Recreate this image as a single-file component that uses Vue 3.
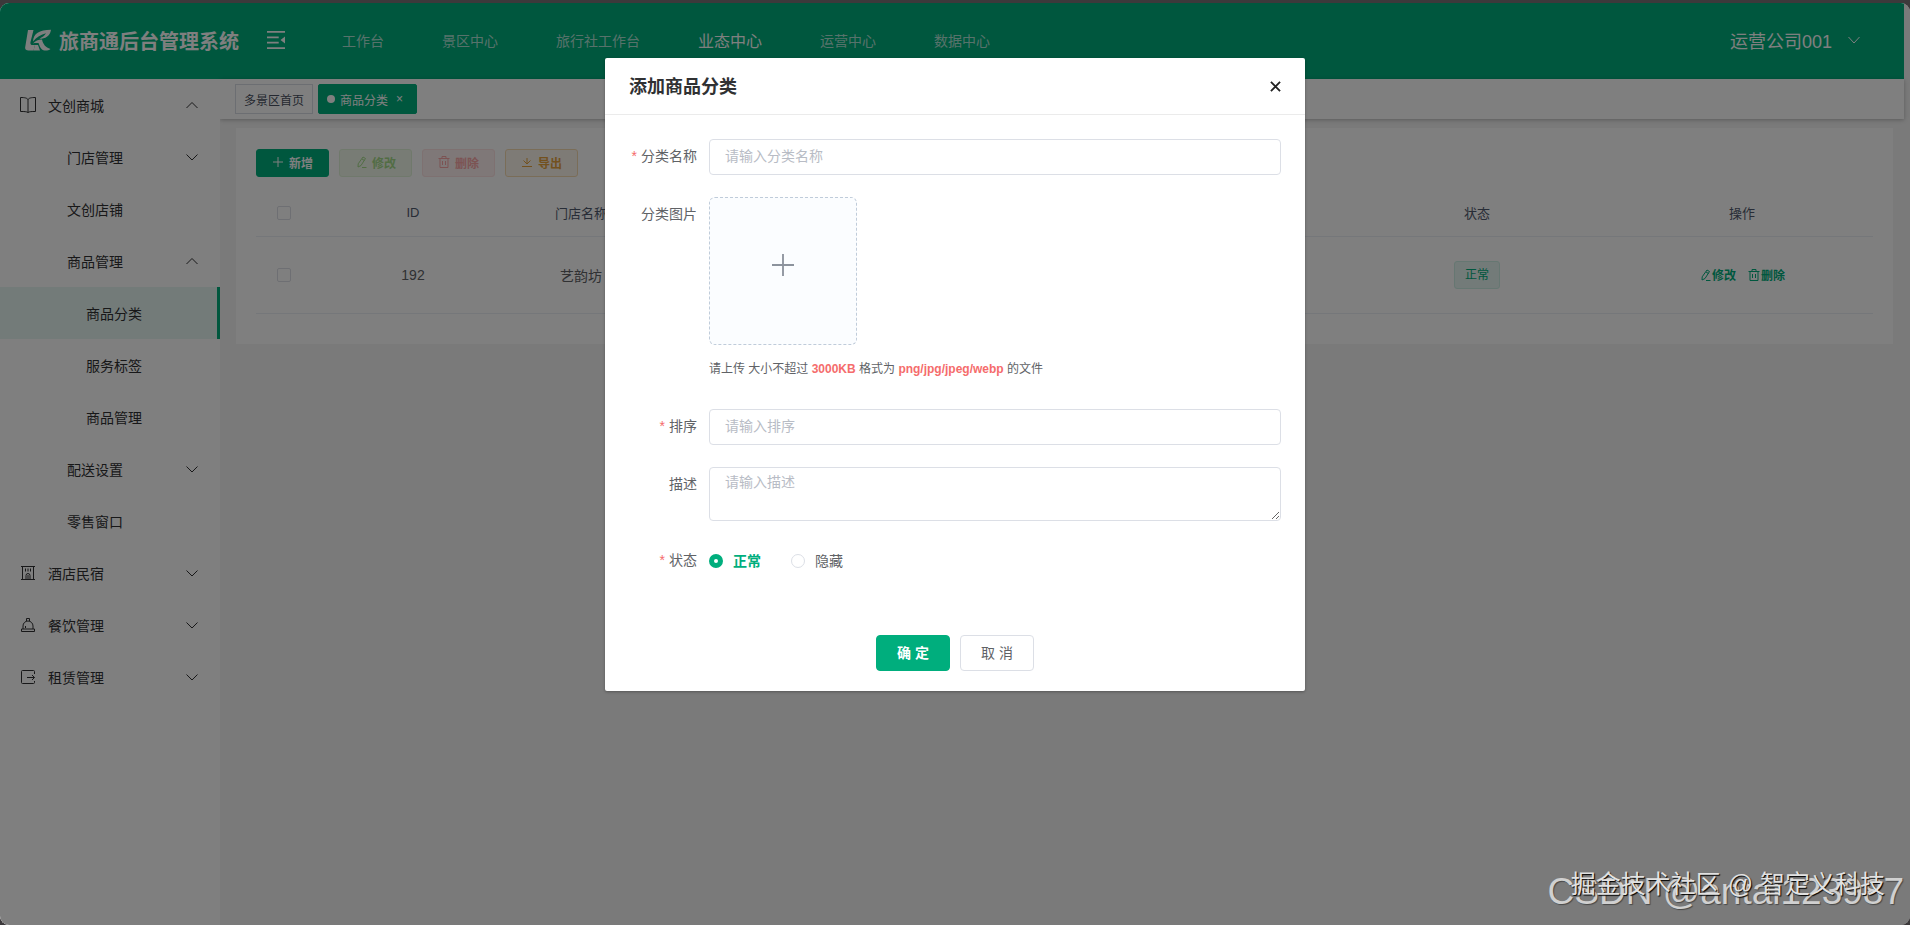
<script setup>
import { ref } from 'vue'

const navItems = [
  { label: '工作台' },
  { label: '景区中心' },
  { label: '旅行社工作台' },
  { label: '业态中心', active: true },
  { label: '运营中心' },
  { label: '数据中心' },
]

const menu = [
  { label: '文创商城', level: 1, icon: 'book', arrow: 'up' },
  { label: '门店管理', level: 2, arrow: 'down' },
  { label: '文创店铺', level: 2 },
  { label: '商品管理', level: 2, arrow: 'up' },
  { label: '商品分类', level: 3, active: true },
  { label: '服务标签', level: 3 },
  { label: '商品管理', level: 3 },
  { label: '配送设置', level: 2, arrow: 'down' },
  { label: '零售窗口', level: 2 },
  { label: '酒店民宿', level: 1, icon: 'hotel', arrow: 'down' },
  { label: '餐饮管理', level: 1, icon: 'bell', arrow: 'down' },
  { label: '租赁管理', level: 1, icon: 'rent', arrow: 'down' },
]

const name = ref('')
const sort = ref('')
const desc = ref('')
const status = ref('normal')
</script>

<template>
  <div class="frame">
    <div class="window">
      <header class="header">
        <div class="brand">
          <svg class="logo" viewBox="0 0 26 22" aria-hidden="true">
            <path d="M3 1h5.500L5.500 13c-.4 2 .3 3 2 3H10l-1.500 5.500h-5C.8 21.500-.3 20 .3 17.500z" />
            <path d="M8 12.500C8.500 4.500 14 1 26 .8c-.8 5-3.500 8.200-9.500 8.900h-2c2.500-1.500 5-3 6.500-5.500C16 5.500 11.500 8 8 12.500z" />
            <path d="M8 14.500c2.500-2.800 5-4 9-4 1 4.500 3.500 8 8.500 9.500-1.500 1.200-3.500 1.700-6 1.500-3-.5-5-3.500-5.700-7.200C11.500 14 10 14 8 14.500z" />
            <path d="M10 16h3l2 5.500H8.500z" />
          </svg>
          <h1 class="brand-name">旅商通后台管理系统</h1>
        </div>
        <button class="fold" type="button" aria-label="menu">
          <svg viewBox="0 0 20 20"><path d="M0 0h20v2H0zM0 6h13v2H0zM0 12h13v2H0zM0 18h20v2H0zM20 6v8L15 10z" /></svg>
        </button>
        <nav class="nav">
          <a v-for="n in navItems" :key="n.label" href="#" :class="{ active: n.active }">{{ n.label }}</a>
        </nav>
        <button class="user" type="button">
          <span>运营公司001</span>
          <svg class="chev" viewBox="0 0 12 12"><path d="M0.500 3l5.500 6 5.500-6" /></svg>
        </button>
      </header>

      <div class="body">
        <aside class="sidebar">
          <a v-for="(m, i) in menu" :key="i" href="#" class="item" :class="['lv' + m.level, { on: m.active }]">
            <svg v-if="m.icon === 'book'" class="micon" viewBox="0 0 16 16"><path d="M8 2.500C7 1 5 .5.5.5v14c4 0 6 0 7.500 1 1.500-1 3.500-1 7.500-1V.5C11 .5 9 1 8 2.500zM8 2.500v13" /></svg>
            <svg v-else-if="m.icon === 'hotel'" class="micon" viewBox="0 0 16 16"><path d="M1 1.500h14M2.500 1v14M13.500 1v14M1 14.500h14M6 15v-4.500a2 2 0 0 1 4 0V15M8 10v5M5.500 3.500v3M8 3.500v3M10.500 3.500v3" /></svg>
            <svg v-else-if="m.icon === 'bell'" class="micon" viewBox="0 0 16 16"><path d="M3 12V9a5 5 0 0 1 10 0v3M1.500 12h13v2.500h-13zM6.500 4V1.500h3V4M5.500 9v2" /></svg>
            <svg v-else-if="m.icon === 'rent'" class="micon" viewBox="0 0 16 16"><path d="M14.500 5V2.500a1 1 0 0 0-1-1h-11a1 1 0 0 0-1 1v11a1 1 0 0 0 1 1h11a1 1 0 0 0 1-1V12M7 8.500h7.500M12 6l2.500 2.500L12 11" /></svg>
            <span class="mlabel">{{ m.label }}</span>
            <svg v-if="m.arrow" class="chev" viewBox="0 0 12 12"><path :d="m.arrow === 'up' ? 'M0.500 9l5.500-5.500L11.500 9' : 'M0.500 3.500l5.500 5.500 5.500-5.500'" /></svg>
          </a>
        </aside>

        <main class="main">
          <div class="tabs">
            <a href="#" class="tab">多景区首页</a>
            <a href="#" class="tab current"><i class="dot"></i>商品分类<span class="x">×</span></a>
          </div>
          <section class="card">
            <div class="tools">
              <button type="button" class="tool primary">
                <svg viewBox="0 0 12 12"><path d="M6 1v10M1 6h10" /></svg>新增
              </button>
              <button type="button" class="tool success">
                <svg viewBox="0 0 12 12"><path d="M8 1l2.500 1.500-4.500 7L3 11l.2-3.200zM7 3l2.500 1.500M7 11.500h4.500" /></svg>修改
              </button>
              <button type="button" class="tool danger">
                <svg viewBox="0 0 12 12"><path d="M.5 2.500h11M4 2.500v-2h4v2M2 2.500v9h8v-9M4.500 5v4M7.500 5v4" /></svg>删除
              </button>
              <button type="button" class="tool warning">
                <svg viewBox="0 0 12 12"><path d="M1 10.500h10M6 2v5.500M2.500 4.500L6 8l3.500-3.500" /></svg>导出
              </button>
            </div>
            <table class="table">
              <colgroup>
                <col class="c-check" /><col class="c-id" /><col class="c-name" /><col /><col class="c-status" /><col class="c-ops" />
              </colgroup>
              <thead>
                <tr>
                  <th><input type="checkbox" class="check" aria-label="全选" /></th>
                  <th>ID</th><th>门店名称</th><th></th><th>状态</th><th>操作</th>
                </tr>
              </thead>
              <tbody>
                <tr>
                  <td><input type="checkbox" class="check" aria-label="192" /></td>
                  <td>192</td>
                  <td>艺韵坊</td>
                  <td></td>
                  <td><span class="tag">正常</span></td>
                  <td>
                    <div class="ops">
                      <button type="button" class="link">
                        <svg viewBox="0 0 12 12"><path d="M8 1l2.500 1.500-4.500 7L3 11l.2-3.200zM7 3l2.500 1.500M7 11.500h4.500" /></svg>修改
                      </button>
                      <button type="button" class="link">
                        <svg viewBox="0 0 12 12"><path d="M.5 2.500h11M4 2.500v-2h4v2M2 2.500v9h8v-9M4.500 5v4M7.500 5v4" /></svg>删除
                      </button>
                    </div>
                  </td>
                </tr>
              </tbody>
            </table>
          </section>
        </main>
      </div>

      <div class="mask">
        <div class="dialog" role="dialog" aria-labelledby="dlg-title">
          <div class="dlg-head">
            <h2 id="dlg-title">添加商品分类</h2>
            <button type="button" class="close" aria-label="关闭">
              <svg viewBox="0 0 12 12"><path d="M1 1l10 10M11 1L1 11" /></svg>
            </button>
          </div>
          <form class="form" @submit.prevent>
            <div class="row">
              <label class="lab req" for="f-name">分类名称</label>
              <input id="f-name" v-model="name" class="field" type="text" placeholder="请输入分类名称" />
            </div>
            <div class="row">
              <label class="lab" for="f-img">分类图片</label>
              <div class="grow">
                <button id="f-img" type="button" class="upload" aria-label="分类图片">
                  <svg viewBox="0 0 24 24"><path d="M12 0v24M0 12h24" /></svg>
                </button>
                <p class="hint">请上传 大小不超过 <b>3000KB</b> 格式为 <b>png/jpg/jpeg/webp</b> 的文件</p>
              </div>
            </div>
            <div class="row">
              <label class="lab req" for="f-sort">排序</label>
              <input id="f-sort" v-model="sort" class="field" type="text" placeholder="请输入排序" />
            </div>
            <div class="row">
              <label class="lab" for="f-desc">描述</label>
              <textarea id="f-desc" v-model="desc" class="field area" placeholder="请输入描述"></textarea>
            </div>
            <div class="row" role="radiogroup" aria-labelledby="f-status">
              <span id="f-status" class="lab req">状态</span>
              <div class="radios">
                <label class="radio"><input v-model="status" type="radio" name="status" value="normal" /><span>正常</span></label>
                <label class="radio"><input v-model="status" type="radio" name="status" value="hidden" /><span>隐藏</span></label>
              </div>
            </div>
            <div class="foot">
              <button type="submit" class="btn ok">确 定</button>
              <button type="button" class="btn">取 消</button>
            </div>
          </form>
        </div>
      </div>
    </div>
    <div class="mark csdn">CSDN @antai123987</div>
    <div class="mark juejin">掘金技术社区 @ 智定义科技</div>
  </div>
</template>

<style>
body {
  background: #3c393b;
}
</style>

<style scoped>
* {
  box-sizing: border-box;
}
.frame {
  position: relative;
  display: flex;
  min-height: 100vh;
  padding-top: 3px;
  overflow: hidden;
  background: #3c393b;
  color: #606266;
  font-family: "Liberation Sans", "Noto Sans CJK SC", sans-serif;
  font-size: 14px;
}
.window {
  position: relative;
  display: flex;
  flex: 1;
  flex-direction: column;
  padding-right: 6px;
  overflow: hidden;
  border-radius: 9px;
  background: #f4f4f4;
}
button {
  border: 0;
  padding: 0;
  background: none;
  font: inherit;
  color: inherit;
}
a {
  color: inherit;
  text-decoration: none;
}
svg {
  flex: none;
  fill: none;
  stroke: currentColor;
}
.header {
  display: flex;
  align-items: center;
  height: 76px;
  padding: 0 44px 2px 25px;
  background: #00ae7d;
  color: #fff;
}
.brand {
  display: flex;
  align-items: center;
  gap: 8px;
}
.logo {
  width: 26px;
  height: 22px;
  fill: #fff;
  stroke: none;
}
.brand-name {
  margin: 0;
  font-size: 20px;
  font-weight: 700;
}
.fold {
  margin-left: 27px;
  line-height: 0;
}
.fold svg {
  width: 20px;
  height: 18px;
  fill: #fff;
  stroke: none;
}
.nav {
  display: flex;
  flex: 1;
  align-items: center;
  gap: 58px;
  margin-left: 56px;
  color: rgba(255, 255, 255, 0.7);
}
.nav .active {
  color: #fff;
  font-size: 16px;
}
.user {
  display: flex;
  align-items: center;
  gap: 16px;
  font-size: 18px;
}
.chev {
  width: 12px;
  height: 12px;
}
.body {
  display: flex;
  flex: 1;
}
.sidebar {
  position: relative;
  z-index: 1;
  flex: none;
  width: 220px;
  background: #fff;
  color: #303133;
}
.item {
  display: flex;
  align-items: center;
  height: 52px;
  padding-right: 22px;
}
.mlabel {
  flex: 1;
}
.lv1 {
  padding-left: 20px;
}
.lv2 {
  padding-left: 67px;
}
.lv3 {
  padding-left: 86px;
}
.micon {
  width: 16px;
  height: 16px;
  margin-right: 12px;
}
.on {
  border-right: 3px solid #00ae7d;
  background: #e6f7f2;
}
.main {
  flex: 1;
  min-width: 0;
}
.tabs {
  display: flex;
  gap: 5px;
  height: 40px;
  padding: 5px 15px;
  background: #fff;
  box-shadow: 0 1px 4px rgba(0, 0, 0, 0.25);
}
.tab {
  display: flex;
  align-items: center;
  height: 30px;
  padding: 0 8px;
  border: 1px solid #d8dce5;
  color: #495060;
  font-size: 12px;
}
.current {
  padding: 0 13px 0 8px;
  border-color: #00ae7d;
  border-radius: 2px;
  background: #00ae7d;
  color: #fff;
}
.dot {
  width: 8px;
  height: 8px;
  margin-right: 5px;
  border-radius: 50%;
  background: #fff;
}
.x {
  margin-left: 8px;
}
.card {
  margin: 9px 11px 0 16px;
  padding: 21px 20px 30px;
  background: #fff;
}
.tools {
  display: flex;
  gap: 10px;
}
.tool {
  display: flex;
  align-items: center;
  justify-content: center;
  gap: 5px;
  width: 73px;
  height: 28px;
  padding-bottom: 2px;
  border: 1px solid;
  border-radius: 3px;
  font-size: 12px;
  font-weight: 700;
}
.tool svg,
.link svg {
  width: 12px;
  height: 12px;
}
.primary {
  border-color: #00ae7d;
  background: #00ae7d;
  color: #fff;
}
.success {
  border-color: #e1f3d8;
  background: #f0f9eb;
  color: #a4da89;
}
.danger {
  border-color: #fde2e2;
  background: #fef0f0;
  color: #f9a7a7;
}
.warning {
  border-color: #f5dab1;
  background: #fdf6ec;
  color: #e6a23c;
}
.table {
  width: 100%;
  margin-top: 13px;
  border-collapse: collapse;
  table-layout: fixed;
  text-align: center;
}
.c-check {
  width: 56px;
}
.c-id {
  width: 202px;
}
.c-name {
  width: 134px;
}
.c-status {
  width: 268px;
}
.c-ops {
  width: 262px;
}
th,
td {
  height: 46px;
  padding: 0;
  border-bottom: 1px solid #ebeef5;
}
th {
  color: #515a6e;
  font-size: 13px;
  font-weight: 400;
}
td {
  height: 77px;
}
.check {
  display: block;
  width: 14px;
  height: 14px;
  margin: 0 auto;
  appearance: none;
  border: 1px solid #dcdfe6;
  border-radius: 2px;
}
.tag {
  display: inline-block;
  padding: 0 10px;
  border: 1px solid #ccefe5;
  border-radius: 3px;
  background: #e6f7f2;
  color: #00ae7d;
  font-size: 12px;
  line-height: 26px;
}
.ops {
  display: flex;
  justify-content: center;
  gap: 12px;
}
.link {
  display: flex;
  align-items: center;
  gap: 1px;
  color: #00ae7d;
  font-size: 12px;
  font-weight: 700;
}
.mask {
  position: absolute;
  inset: 0;
  z-index: 2;
  padding-top: 55px;
  background: rgba(0, 0, 0, 0.5);
}
.dialog {
  width: 700px;
  margin: 0 auto;
  border-radius: 2px;
  background: #fff;
  box-shadow: 0 1px 3px rgba(0, 0, 0, 0.3);
}
.dlg-head {
  display: flex;
  align-items: center;
  justify-content: space-between;
  height: 57px;
  padding: 0 24px;
  border-bottom: 1px solid #ebebeb;
}
.dlg-head h2 {
  margin: 0;
  padding-bottom: 2px;
  color: #303133;
  font-size: 18px;
  font-weight: 700;
}
.close {
  width: 11px;
  line-height: 0;
  color: #222;
}
.close svg {
  width: 11px;
  height: 11px;
  stroke-width: 2;
}
.form {
  padding: 24px 24px 20px;
}
.row {
  display: flex;
  margin-bottom: 22px;
}
.lab {
  flex: none;
  width: 80px;
  padding-right: 12px;
  line-height: 34px;
  text-align: right;
}
.req::before {
  content: "*";
  margin-right: 4px;
  color: #f56c6c;
}
.grow {
  flex: 1;
}
.field {
  flex: 1;
  min-width: 0;
  height: 36px;
  padding: 0 15px 2px;
  border: 1px solid #dcdfe6;
  border-radius: 4px;
  outline: 0;
  background: #fff;
  color: #606266;
  font: inherit;
}
.field::placeholder {
  color: #b8bcc5;
}
.area {
  height: 54px;
  padding: 4px 15px;
  line-height: 21px;
  resize: vertical;
}
.upload {
  display: flex;
  align-items: center;
  justify-content: center;
  width: 148px;
  height: 148px;
  padding-bottom: 12px;
  border: 1px dashed #c0ccda;
  border-radius: 6px;
  background: #fbfdff;
  color: #8c939d;
}
.upload svg {
  width: 22px;
  height: 22px;
  stroke-width: 2;
}
.hint {
  margin: 13px 0 6px;
  font-size: 12px;
  line-height: 23px;
}
.hint b {
  color: #f56c6c;
}
.radios {
  display: flex;
  align-items: center;
  gap: 30px;
  height: 36px;
}
.radio {
  display: flex;
  align-items: center;
  gap: 10px;
}
.radio input {
  width: 14px;
  height: 14px;
  margin: 0;
  appearance: none;
  border: 1px solid #dcdfe6;
  border-radius: 50%;
  background: #fff;
}
.radio input:checked {
  border: 5px solid #00ae7d;
}
.radio span {
  padding-bottom: 2px;
}
.radio input:checked + span {
  color: #00ae7d;
  font-weight: 700;
}
.foot {
  display: flex;
  justify-content: center;
  gap: 10px;
  padding-top: 34px;
}
.btn {
  width: 74px;
  height: 36px;
  padding-bottom: 2px;
  border: 1px solid #dcdfe6;
  border-radius: 4px;
}
.ok {
  border-color: #00ae7d;
  background: #00ae7d;
  color: #fff;
  font-weight: 700;
}
.mark {
  position: absolute;
  right: 6px;
  bottom: 12px;
  z-index: 3;
  color: #d0d0d0;
  font-size: 37px;
  line-height: 42px;
  white-space: nowrap;
  text-shadow: 1px 1px 1px rgba(0, 0, 0, 0.4);
}
.juejin {
  right: 25px;
  bottom: 20px;
  color: #e2e2e2;
  font-size: 25px;
  text-shadow: 1px 1px 1px #000;
}
</style>
